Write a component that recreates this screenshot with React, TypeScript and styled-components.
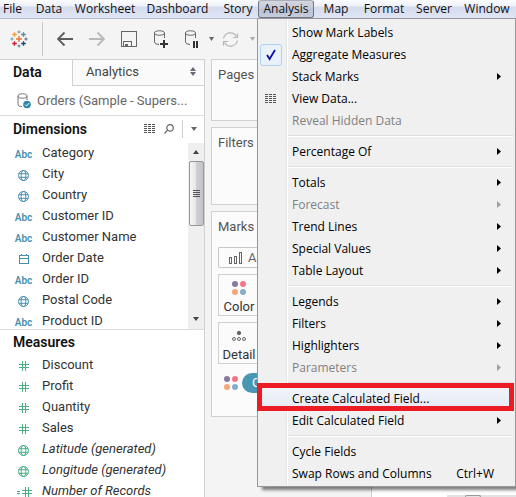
import React from "react";
import styled, { createGlobalStyle, css } from "styled-components";

const GlobalStyle = createGlobalStyle`
  *, *::before, *::after { box-sizing: border-box; }
  body { margin: 0; background: #f4f4f4; overflow: hidden; }
  button { font: inherit; color: inherit; background: none; border: 0; padding: 0; margin: 0; text-align: left; }
  svg { display: block; flex: none; }
  ul { list-style: none; margin: 0; padding: 0; }
`;

const BLUE = "#4a8fae";
const GREEN = "#4aae84";
const uiFont = '"Open Sans", "Noto Sans", sans-serif';

const Page = styled.div`
  height: 100vh;
  display: flex;
  flex-direction: column;
  overflow: hidden;
  background: #f4f4f4;
  color: #333;
  font: 13px/20px Roboto, sans-serif;
`;

/* ---------- menu bar ---------- */

const MenuBar = styled.nav`
  flex: none;
  display: flex;
  height: 19px;
  padding-right: 4px;
  white-space: nowrap;
  font: 12px/18px ${uiFont};
  color: #111;
  border-bottom: 1px solid #b4bbd0;
  background: linear-gradient(#fbfcfe 0, #eef1f9 6px, #d5dcee 7px, #dfe5f4 18px);
`;

const MenuSlot = styled.div<{ $w: number }>`
  position: relative;
  flex: 0 0 ${(p) => p.$w}px;
  display: flex;
`;

const MenuTitle = styled.button<{ $open?: boolean }>`
  flex: 1;
  height: 18px;
  text-align: center;
  ${(p) =>
    p.$open &&
    css`
      border: 1px solid #6f7684;
      border-top-color: #a9afba;
      border-radius: 3px;
      line-height: 16px;
      background: linear-gradient(#d3d6df, #c5cad8 50%, #b9c0d2 50%, #c6ccdb);
    `}
`;

/* ---------- drop-down menu ---------- */

const Menu = styled.div`
  position: absolute;
  z-index: 5;
  top: 18px;
  left: -1px;
  width: 259px;
  padding: 3px 2px 1px;
  border: 1px solid #979797;
  background: linear-gradient(to right, #f0f0f0 28px, #e2e3e3 28px, #e2e3e3 29px, #fff 29px, #fff 30px, #f0f0f0 30px);
  box-shadow: 4px 4px 3px -1px rgba(0, 0, 0, 0.5);
`;

const MenuRow = styled.button<{ $disabled?: boolean; $hot?: boolean }>`
  position: relative;
  width: 100%;
  height: 22px;
  display: grid;
  grid-template-columns: 32px 1fr auto 16px;
  align-items: center;
  line-height: 22px;
  color: ${(p) => (p.$disabled ? "#808080" : "#000")};
  background: ${(p) => (p.$hot ? "linear-gradient(to bottom, #f1f4f9, #e3e9f4)" : "none")};
`;

const MenuGlyph = styled.span`
  display: flex;
  justify-content: center;
  width: 22px;
`;

const CheckBadge = styled.span`
  display: grid;
  place-items: center;
  width: 22px;
  height: 22px;
  border: 1px solid #afd0f7;
  border-radius: 3px;
  background: #e9f1fa;
`;

const Shortcut = styled.span`
  padding-right: 3px;
`;

const Divider = styled.hr`
  height: 2px;
  margin: 3px 0 4px 28px;
  border: 0;
  border-top: 1px solid #e0e0e0;
  border-bottom: 1px solid #fff;
`;

const Callout = styled.span`
  position: absolute;
  inset: -5px -1px -1px -3px;
  border: 5px solid #ed1c24;
  pointer-events: none;
`;

/* ---------- toolbar ---------- */

const Toolbar = styled.div`
  flex: none;
  display: flex;
  align-items: center;
  height: 40px;
  padding-left: 10px;
`;

const ToolButton = styled.button<{ $gap: number }>`
  margin-left: ${(p) => p.$gap}px;
`;

const ToolRule = styled.span`
  width: 1px;
  height: 34px;
  margin-left: 14px;
  background: #c8c8c8;
`;

/* ---------- workspace ---------- */

const Workspace = styled.div`
  flex: 1;
  min-height: 0;
  display: grid;
  grid-template-columns: 205px 166px 1fr;
`;

const DataPane = styled.aside`
  min-height: 0;
  display: flex;
  flex-direction: column;
  overflow: hidden;
  background: #fff;
  border-top: 1px solid #d0d0d0;
  border-right: 1px solid #d0d0d0;
`;

const Tabs = styled.div`
  flex: none;
  display: flex;
  height: 26px;
`;

const Tab = styled.button<{ $active?: boolean }>`
  display: flex;
  align-items: center;
  justify-content: space-between;
  flex: ${(p) => (p.$active ? "0 0 72px" : "1")};
  padding: 0 8px 2px 13px;
  font-size: ${(p) => (p.$active ? 14 : 13)}px;
  font-weight: ${(p) => (p.$active ? 600 : 400)};
  color: ${(p) => (p.$active ? "#111" : "#444")};
  ${(p) =>
    !p.$active &&
    css`
      background: #fafafa;
      border-left: 1px solid #d0d0d0;
      border-bottom: 1px solid #d0d0d0;
    `}
`;

const Source = styled.button`
  flex: none;
  display: flex;
  align-items: center;
  gap: 6px;
  height: 30px;
  padding-left: 17px;
  color: #666;
  border-bottom: 1px solid #dcdcdc;
`;

const SectionHead = styled.header<{ $h: number }>`
  flex: none;
  display: flex;
  align-items: center;
  height: ${(p) => p.$h}px;
  padding: 0 7px 2px 13px;
`;

const SectionTitle = styled.h2`
  flex: 1;
  margin: 0;
  font-size: 14px;
  font-weight: 600;
  color: #111;
`;

const HeadTools = styled.div`
  display: flex;
  align-items: center;
  gap: 8px;
`;

const HeadRule = styled.span`
  width: 1px;
  height: 18px;
  background: #d0d0d0;
`;

const DimensionArea = styled.div`
  flex: none;
  display: flex;
  height: 187px;
  overflow: hidden;
  border-bottom: 1px solid #dcdcdc;
`;

const FieldList = styled.ul`
  flex: 1;
`;

const FieldButton = styled.button<{ $italic?: boolean }>`
  display: grid;
  grid-template-columns: 17px 1fr;
  column-gap: 10px;
  align-items: center;
  height: 21px;
  padding-left: 15px;
  font-style: ${(p) => (p.$italic ? "italic" : "normal")};
  white-space: nowrap;
`;

const FieldName = styled.span`
  padding-bottom: 2px;
`;

const IconCell = styled.span`
  display: flex;
  justify-content: center;
`;

const Abc = styled.span`
  font-size: 10px;
  font-weight: 600;
  font-style: normal;
  line-height: 21px;
  color: ${BLUE};
`;

const ScrollTrack = styled.div`
  width: 16px;
  display: flex;
  flex-direction: column;
  align-items: center;
  padding-bottom: 1px;
  background: #efefef;
`;

const ScrollArrow = styled.button`
  display: grid;
  place-items: center;
  width: 15px;
  height: 18px;
`;

const ScrollThumb = styled.div`
  display: grid;
  place-items: center;
  width: 15px;
  height: 65px;
  margin-bottom: auto;
  border: 1px solid #979797;
  border-radius: 2px;
  background: linear-gradient(to right, #f5f5f5, #e6e6e8 45%, #cfcfd3 50%, #c4c4c8);
`;

const Shelves = styled.section`
  display: flex;
  flex-direction: column;
  gap: 6px;
  padding-left: 6px;
`;

const Card = styled.section<{ $h: number }>`
  flex: none;
  height: ${(p) => p.$h}px;
  padding: 5px 6px;
  border: 1px solid #d0d0d0;
  background: #fbfbfb;
`;

const CardTitle = styled.h3`
  margin: 0;
  font-size: 13px;
  line-height: 20px;
  font-weight: 400;
  color: #555;
`;

const MarkType = styled.button`
  display: flex;
  align-items: center;
  gap: 6px;
  width: 100%;
  height: 21px;
  margin-top: 10px;
  padding-left: 10px;
  border: 1px solid #c8c8c8;
  border-radius: 1px;
  color: #666;
`;

const MarkButton = styled.button`
  display: flex;
  flex-direction: column;
  align-items: center;
  justify-content: space-between;
  width: 42px;
  height: 42px;
  margin-top: 6px;
  padding: 6px 0 0;
  border: 1px solid #d0d0d0;
  line-height: 17px;
`;

const PillRow = styled.div`
  display: flex;
  align-items: center;
  gap: 4px;
  margin-top: 9px;
  padding-left: 6px;
`;

const Pill = styled.button`
  width: 96px;
  height: 20px;
  padding-left: 10px;
  border-radius: 10px;
  color: #fff;
  background: #4996b2;
`;

const Canvas = styled.main`
  display: flex;
  flex-direction: column;
  justify-content: flex-end;
  background: #fff;
  border-left: 1px solid #d0d0d0;
`;

const CanvasScroll = styled.div`
  height: 2px;
  margin-left: 75px;
  padding-left: 18px;
  background: #e3e3e3;
`;

const CanvasThumb = styled.div`
  width: 16px;
  height: 2px;
  border: 1px solid #979797;
  border-bottom: 0;
  border-radius: 2px 2px 0 0;
`;

/* ---------- icons ---------- */

const Plus = ({ x, y, r, c }: { x: number; y: number; r: number; c: string }) => (
  <path d={`M${x - r} ${y}H${x + r}M${x} ${y - r}V${y + r}`} stroke={c} strokeWidth={r > 2 ? 1.4 : 1.1} />
);

const Logo = () => (
  <svg width="18" height="18" viewBox="0 0 18 18">
    <Plus x={9} y={9} r={3} c="#e8762c" />
    <Plus x={4.5} y={4.5} r={2.3} c="#ed9a45" />
    <Plus x={13.5} y={4.5} r={2.3} c="#5b879b" />
    <Plus x={4.5} y={13.5} r={2.3} c="#c72035" />
    <Plus x={13.5} y={13.5} r={2.3} c="#1f447e" />
    <Plus x={9} y={2} r={1.6} c="#7099a6" />
    <Plus x={9} y={16} r={1.6} c="#59879b" />
    <Plus x={2} y={9} r={1.6} c="#7099a6" />
    <Plus x={16} y={9} r={1.6} c="#5b6591" />
  </svg>
);

const Arrow = ({ flip }: { flip?: boolean }) => (
  <svg width="16" height="16" viewBox="0 0 16 16" fill="none" stroke={flip ? "#b9b9b9" : "#5c5c5c"} strokeWidth="1.8">
    <path d={flip ? "M0 8H15M8.5 1.5L15 8L8.5 14.5" : "M16 8H1M7.5 1.5L1 8L7.5 14.5"} />
  </svg>
);

const Save = () => (
  <svg width="16" height="16" viewBox="0 0 16 16" fill="none" stroke="#666" shapeRendering="crispEdges">
    <path d="M.5 .5H15.5V15.5H.5ZM2.5 15V10.5H10.5V15" />
    <path d="M4 13H7V15H4Z" fill="#666" stroke="none" />
  </svg>
);

const Cylinder = ({ pause }: { pause?: boolean }) => (
  <svg width="15" height="19" viewBox="0 0 15 19" fill="none" stroke="#666">
    <ellipse cx="5.5" cy="3" rx="5" ry="2.2" />
    <path d="M.5 3V12Q1 14.5 5 14.5M10.5 3V8" />
    {pause ? (
      <path d="M9 11V18M12 11V18" stroke="#333" strokeWidth="2" />
    ) : (
      <path d="M6 14H14M10 10V18" stroke="#333" strokeWidth="2" />
    )}
  </svg>
);

const Refresh = () => (
  <svg width="17" height="17" viewBox="0 0 17 17" fill="none" stroke="#b5b5b5" strokeWidth="1.2">
    <path d="M1.5 7.5A7 7 0 0 1 14.5 5.5M15.5 9.5A7 7 0 0 1 2.5 11.5" />
    <path d="M15.5 2.5V6.5H11M1.5 14.5V10.5H6" />
  </svg>
);

const Caret = ({ color = "#666", up, w = 6 }: { color?: string; up?: boolean; w?: number }) => (
  <svg width={w} height="4" viewBox="0 0 6 4" preserveAspectRatio="none">
    <path d={up ? "M0 4L3 0L6 4Z" : "M0 0L3 4L6 0Z"} fill={color} />
  </svg>
);

const Sorter = () => (
  <svg width="6" height="9" viewBox="0 0 6 9" fill="#69697a">
    <path d="M0 4L3 0L6 4ZM0 5L3 9L6 5Z" />
  </svg>
);

const SourceIcon = () => (
  <svg width="14" height="16" viewBox="0 0 14 16" fill="none" stroke="#777">
    <ellipse cx="5.5" cy="3" rx="4.5" ry="2.2" />
    <path d="M1 3V12Q1.5 13.5 5 13.5M10 3V7" />
    <circle cx="10" cy="11.5" r="3.8" fill="#2e86a8" stroke="none" />
    <path d="M8.2 11.6L9.6 13L12 10.2" stroke="#fff" />
  </svg>
);

const GridIcon = () => (
  <svg width="12" height="10" viewBox="0 0 12 10" stroke="#555" shapeRendering="crispEdges">
    <path d="M0 .5H12M0 2.5H12M0 4.5H12M0 6.5H12M0 8.5H12" strokeDasharray="3 1" />
  </svg>
);

const Search = () => (
  <svg width="10" height="10" viewBox="0 0 10 10" fill="none" stroke="#666" strokeWidth="1.2">
    <circle cx="6" cy="3.9" r="3.2" />
    <path d="M3.6 6.2L.5 9.5" />
  </svg>
);

const Globe = ({ color }: { color: string }) => (
  <svg width="11" height="11" viewBox="0 0 11 11" fill="none" stroke={color}>
    <circle cx="5.5" cy="5.5" r="5" />
    <ellipse cx="5.5" cy="5.5" rx="2.3" ry="5" />
    <path d="M1 3.7H10M1 7.3H10" />
  </svg>
);

const Calendar = () => (
  <svg width="10" height="10" viewBox="0 0 10 10" fill="none" stroke={BLUE} shapeRendering="crispEdges">
    <path d="M.5 1.5H9.5V9.5H.5ZM0 4.5H10M2.5 0V2M7.5 0V2" />
  </svg>
);

const Hash = ({ calc }: { calc?: boolean }) => (
  <svg width={calc ? 16 : 10} height="10" viewBox={calc ? "-6 0 16 10" : "0 0 10 10"} fill="none" stroke={GREEN} shapeRendering="crispEdges">
    <path d="M0 3.5H10M0 6.5H10M3.5 0V10M6.5 0V10" />
    {calc && <path d="M-5 4.5H-2M-5 6.5H-2" />}
  </svg>
);

const Bars = () => (
  <svg width="13" height="12" viewBox="0 0 13 12" fill="none" stroke="#666" shapeRendering="crispEdges">
    <path d="M.5 5.5H2.5V11.5H.5ZM5.5 4.5H7.5V11.5H5.5ZM10.5 .5H12.5V11.5H10.5Z" />
  </svg>
);

const Dots = () => (
  <svg width="14" height="14" viewBox="0 0 14 14">
    <circle cx="3" cy="3" r="3" fill="#8877a0" />
    <circle cx="11" cy="3" r="3" fill="#f47683" />
    <circle cx="3" cy="11" r="3" fill="#f4a77b" />
    <circle cx="11" cy="11" r="3" fill="#85adc8" />
  </svg>
);

const DetailIcon = () => (
  <svg width="14" height="14" viewBox="0 0 14 14" fill="none" stroke="#666">
    <circle cx="7" cy="4" r="1.7" fill="#666" />
    <circle cx="2" cy="10" r="1.5" />
    <circle cx="7" cy="10" r="1.5" />
    <circle cx="12" cy="10" r="1.5" />
  </svg>
);

const Check = () => (
  <svg width="10" height="12" viewBox="0 0 10 12" fill="none" stroke="#0c12a1" strokeWidth="1.8">
    <path d="M1 6L3.6 10L9 1" />
  </svg>
);

const SubArrow = ({ color }: { color: string }) => (
  <svg width="4" height="8" viewBox="0 0 4 8">
    <path d="M0 0L4 3.5L0 7Z" fill={color} />
  </svg>
);

const Grip = () => (
  <svg width="7" height="8" viewBox="0 0 7 8" stroke="#555" shapeRendering="crispEdges">
    <path d="M0 .5H7M0 2.5H7M0 4.5H7M0 6.5H7" />
  </svg>
);

/* ---------- data ---------- */

type Item = { label: string; sub?: boolean; off?: boolean; icon?: "check" | "grid"; key?: string; hot?: boolean };

const groups: Item[][] = [
  [
    { label: "Show Mark Labels" },
    { label: "Aggregate Measures", icon: "check" },
    { label: "Stack Marks", sub: true },
    { label: "View Data...", icon: "grid" },
    { label: "Reveal Hidden Data", off: true },
  ],
  [{ label: "Percentage Of", sub: true }],
  [
    { label: "Totals", sub: true },
    { label: "Forecast", sub: true, off: true },
    { label: "Trend Lines", sub: true },
    { label: "Special Values", sub: true },
    { label: "Table Layout", sub: true },
  ],
  [
    { label: "Legends", sub: true },
    { label: "Filters", sub: true },
    { label: "Highlighters", sub: true },
    { label: "Parameters", sub: true, off: true },
  ],
  [{ label: "Create Calculated Field...", hot: true }, { label: "Edit Calculated Field", sub: true }],
  [{ label: "Cycle Fields" }, { label: "Swap Rows and Columns", key: "Ctrl+W" }],
];

const titles: [string, number][] = [
  ["File", 25],
  ["Data", 48],
  ["Worksheet", 64],
  ["Dashboard", 81],
  ["Story", 40],
  ["Analysis", 56],
  ["Map", 44],
  ["Format", 52],
  ["Server", 48],
  ["Window", 58],
];

type Kind = "abc" | "globe" | "date" | "hash" | "calc";
type Field = [string, Kind];

const dimensions: Field[] = [
  ["Category", "abc"],
  ["City", "globe"],
  ["Country", "globe"],
  ["Customer ID", "abc"],
  ["Customer Name", "abc"],
  ["Order Date", "date"],
  ["Order ID", "abc"],
  ["Postal Code", "globe"],
  ["Product ID", "abc"],
];

const measures: Field[] = [
  ["Discount", "hash"],
  ["Profit", "hash"],
  ["Quantity", "hash"],
  ["Sales", "hash"],
  ["Latitude (generated)", "globe"],
  ["Longitude (generated)", "globe"],
  ["Number of Records", "calc"],
];

const FieldIcon = ({ kind, color }: { kind: Kind; color: string }) => {
  if (kind === "abc") return <Abc>Abc</Abc>;
  if (kind === "globe") return <Globe color={color} />;
  if (kind === "date") return <Calendar />;
  return <Hash calc={kind === "calc"} />;
};

const Fields = ({ fields, color, generated }: { fields: Field[]; color: string; generated?: boolean }) => (
  <FieldList>
    {fields.map(([name, kind]) => (
      <li key={name}>
        <FieldButton $italic={generated && kind !== "hash"}>
          <IconCell>
            <FieldIcon kind={kind} color={color} />
          </IconCell>
          <FieldName>{name}</FieldName>
        </FieldButton>
      </li>
    ))}
  </FieldList>
);

const AnalysisMenu = () => (
  <Menu role="menu">
    {groups.map((group, i) => (
      <React.Fragment key={i}>
        {i > 0 && <Divider />}
        {group.map((item) => (
          <MenuRow key={item.label} role="menuitem" disabled={item.off} $disabled={item.off} $hot={item.hot}>
            <MenuGlyph>
              {item.icon === "check" && (
                <CheckBadge>
                  <Check />
                </CheckBadge>
              )}
              {item.icon === "grid" && <GridIcon />}
            </MenuGlyph>
            <span>{item.label}</span>
            <Shortcut>{item.key}</Shortcut>
            {item.sub && <SubArrow color={item.off ? "#a0a0a0" : "#000"} />}
            {item.hot && <Callout />}
          </MenuRow>
        ))}
      </React.Fragment>
    ))}
  </Menu>
);

export default function App() {
  return (
    <Page>
      <GlobalStyle />
      <MenuBar>
        {titles.map(([name, w]) => (
          <MenuSlot key={name} $w={w}>
            <MenuTitle $open={name === "Analysis"}>{name}</MenuTitle>
            {name === "Analysis" && <AnalysisMenu />}
          </MenuSlot>
        ))}
      </MenuBar>
      <Toolbar>
        <Logo />
        <ToolRule />
        <ToolButton $gap={14} aria-label="Back"><Arrow /></ToolButton>
        <ToolButton $gap={16} aria-label="Forward"><Arrow flip /></ToolButton>
        <ToolButton $gap={16} aria-label="Save"><Save /></ToolButton>
        <ToolButton $gap={17} aria-label="New data source"><Cylinder /></ToolButton>
        <ToolButton $gap={16} aria-label="Pause updates"><Cylinder pause /></ToolButton>
        <ToolButton $gap={9} aria-label="Update options"><Caret w={5} /></ToolButton>
        <ToolButton $gap={8} aria-label="Refresh"><Refresh /></ToolButton>
        <ToolButton $gap={11} aria-label="Refresh options"><Caret w={5} color="#aaa" /></ToolButton>
      </Toolbar>
      <Workspace>
        <DataPane>
          <Tabs>
            <Tab $active>Data</Tab>
            <Tab>
              Analytics <Sorter />
            </Tab>
          </Tabs>
          <Source>
            <SourceIcon /> Orders (Sample - Supers...
          </Source>
          <SectionHead $h={27}>
            <SectionTitle>Dimensions</SectionTitle>
            <HeadTools>
              <GridIcon />
              <Search />
              <HeadRule />
              <Caret />
            </HeadTools>
          </SectionHead>
          <DimensionArea>
            <Fields fields={dimensions} color={BLUE} />
            <ScrollTrack>
              <ScrollArrow aria-label="Scroll up"><Caret up color="#444" /></ScrollArrow>
              <ScrollThumb><Grip /></ScrollThumb>
              <ScrollArrow aria-label="Scroll down"><Caret color="#444" /></ScrollArrow>
            </ScrollTrack>
          </DimensionArea>
          <SectionHead $h={25}>
            <SectionTitle>Measures</SectionTitle>
          </SectionHead>
          <Fields fields={measures} color={GREEN} generated />
        </DataPane>
        <Shelves>
          <Card $h={62}>
            <CardTitle>Pages</CardTitle>
          </Card>
          <Card $h={78}>
            <CardTitle>Filters</CardTitle>
          </Card>
          <Card $h={206}>
            <CardTitle>Marks</CardTitle>
            <MarkType>
              <Bars /> Auto
            </MarkType>
            <MarkButton>
              <Dots />
              Color
            </MarkButton>
            <MarkButton>
              <DetailIcon />
              Detail
            </MarkButton>
            <PillRow>
              <Dots />
              <Pill>Category</Pill>
            </PillRow>
          </Card>
        </Shelves>
        <Canvas>
          <CanvasScroll>
            <CanvasThumb />
          </CanvasScroll>
        </Canvas>
      </Workspace>
    </Page>
  );
}
